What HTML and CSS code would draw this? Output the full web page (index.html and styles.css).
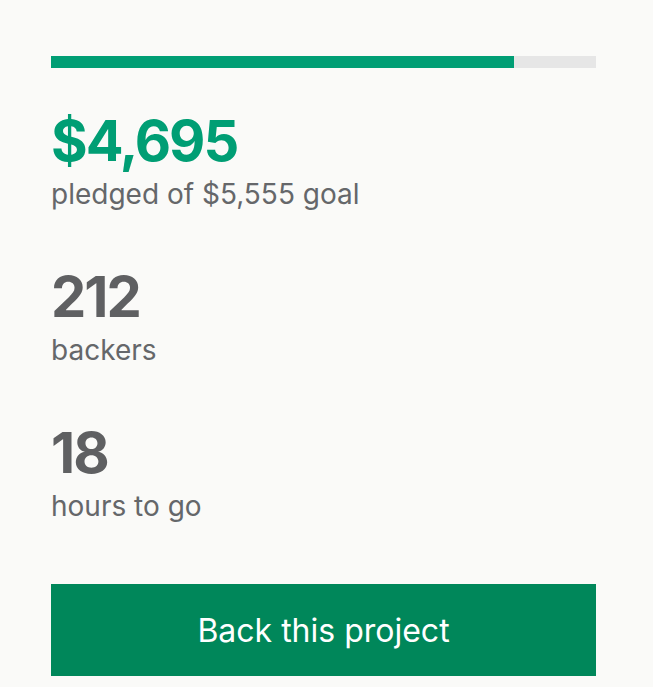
FILE: index.html
```html
<!DOCTYPE html>
<html lang="en">
<head>
    <meta charset="UTF-8">
    <meta name="viewport" content="width=device-width, initial-scale=1.0">
    <title>Project stats</title>
    <link rel="stylesheet" href="styles.css">
</head>
<body>
    <div class="stats">

        <div class="progress">
            <div class="progress-fill" style="width: 85%"></div>
        </div>

        <div class="stat">
            <div class="stat-num green">$4,695</div>
            <div class="stat-label">pledged of $5,555 goal</div>
        </div>

        <div class="stat">
            <div class="stat-num">212</div>
            <div class="stat-label">backers</div>
        </div>

        <div class="stat">
            <div class="stat-num">18</div>
            <div class="stat-label">hours to go</div>
        </div>

        <div class="btn">Back this project</div>
    </div>
</body>
</html>
```

FILE: styles.css
```css
body{
    margin: 0;
    background-color: #fafaf8;
    font-family: Inter, "Noto Sans", sans-serif;
}

.stats{
    width: 545px;
    padding: 56px 51px 0;
    display: flex;
    flex-direction: column;
}

.progress{
    height: 12px;
    background-color: #e6e6e6;
}

.progress-fill{
    height: 100%;
    background-color: #009e74;
}

.stat{
    margin-top: 39px;
}

.stat + .stat{
    margin-top: 50px;
}

.stat-num{
    font-size: 56px;
    font-weight: 700;
    line-height: 68px;
    letter-spacing: -2px;
    color: #5f6062;
}

.stat-num.green{
    color: #009e74;
}

.stat-label{
    font-size: 28px;
    line-height: 38px;
    color: #65676a;
}

.btn{
    margin-top: 59px;
    height: 92px;
    background-color: #00875a;

    display: flex;
    align-items: center;
    justify-content: center;

    font-size: 32px;
    color: #ffffff;

    cursor: pointer;
}

.btn:hover{
    filter: brightness(90%)
}
```
